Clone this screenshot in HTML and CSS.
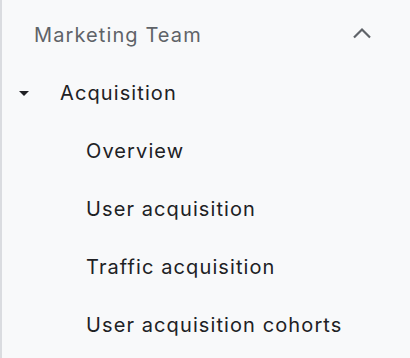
FILE: index.html
```html
<!DOCTYPE html>
<html lang="en">
<head>
    <meta charset="UTF-8">
    <title>Nav</title>
    <link rel="stylesheet" href="styles.css">
</head>
<body>
  <nav class="sidenav">
    <div class="group-header">
      <span class="group-title">Marketing Team</span>
      <svg class="chevron" width="24" height="24" viewBox="0 0 24 24">
        <polyline points="4,14.5 12,6.5 20,14.5" fill="none" stroke="#5f6368" stroke-width="2.2"/>
      </svg>
    </div>

    <div class="section">
      <svg class="caret" width="24" height="24" viewBox="0 0 24 24">
        <path d="M7 10l5 5 5-5z" fill="#202124"/>
      </svg>
      <span class="section-title">Acquisition</span>
    </div>

    <ul class="items">
      <li class="item">Overview</li>
      <li class="item">User acquisition</li>
      <li class="item">Traffic acquisition</li>
      <li class="item">User acquisition cohorts</li>
    </ul>
  </nav>
</body>
</html>
```

FILE: styles.css
```css
* {
    margin: 0;
    padding: 0;
    box-sizing: border-box;
}

body {
    font-family: Inter, Roboto, sans-serif;
    background: #f8f9fa;
    color: #202124;
    width: 410px;
    height: 358px;
    overflow: hidden;
}

.sidenav {
    height: 358px;
    border-left: 2px solid #dadce0;
    padding-top: 6px;
    font-size: 20px;
    letter-spacing: 1.1px;
}

.group-header {
    display: flex;
    align-items: center;
    justify-content: space-between;
    height: 58px;
    padding-left: 32px;
    padding-right: 36px;
}

.group-title {
    color: #5f6368;
}

.section {
    display: flex;
    align-items: center;
    height: 58px;
    padding-left: 10px;
}

.caret {
    margin-right: 24px;
}

.items {
    list-style: none;
}

.item {
    display: flex;
    align-items: center;
    height: 58px;
    padding-left: 84px;
}
```
